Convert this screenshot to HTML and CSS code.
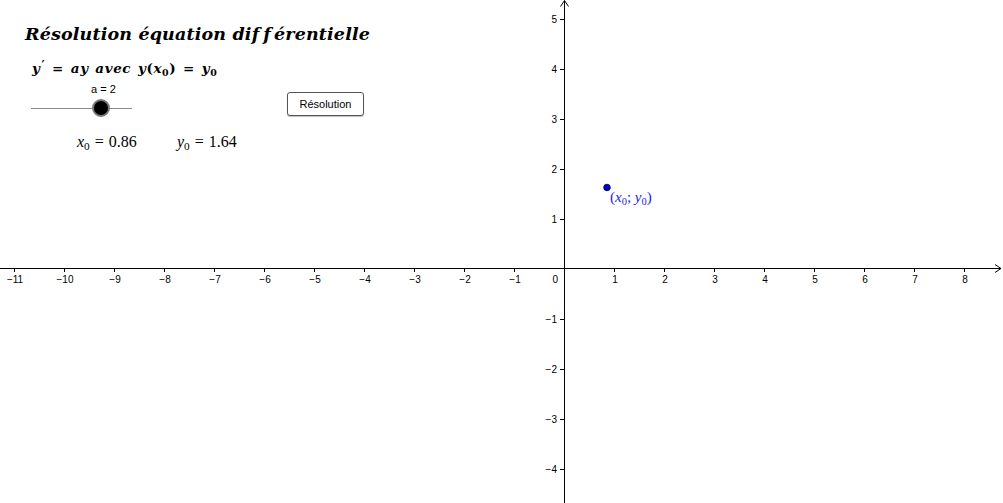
FILE: index.html
```html
<!DOCTYPE html>
<html lang="fr">
<head>
<meta charset="utf-8">
<title>Résolution équation différentielle</title>
<link rel="stylesheet" href="styles.css">
</head>
<body>
<div class="canvas">
  <svg class="axes" width="1003" height="503" viewBox="0 0 1003 503" xmlns="http://www.w3.org/2000/svg">
    <g stroke="#000" stroke-width="1" fill="none">
      <line x1="0" y1="268.5" x2="1001" y2="268.5"/>
      <polyline points="995,264.5 1001,268.5 995,272.5"/>
      <line x1="564.5" y1="0.5" x2="564.5" y2="503"/>
      <polyline points="560.5,6.5 564.5,0.5 568.5,6.5"/>
      <path d="M14.5 268v4M64.5 268v4M114.5 268v4M164.5 268v4M214.5 268v4M264.5 268v4M314.5 268v4M364.5 268v4M414.5 268v4M464.5 268v4M514.5 268v4M614.5 268v4M664.5 268v4M714.5 268v4M764.5 268v4M814.5 268v4M864.5 268v4M914.5 268v4M964.5 268v4"/>
      <path d="M560 19.5h4M560 69.5h4M560 119.5h4M560 169.5h4M560 219.5h4M560 319.5h4M560 369.5h4M560 419.5h4M560 469.5h4"/>
    </g>
    <g class="ticklabels" text-anchor="middle">
      <text x="15" y="283">−11</text>
      <text x="65" y="283">−10</text>
      <text x="115" y="283">−9</text>
      <text x="165" y="283">−8</text>
      <text x="215" y="283">−7</text>
      <text x="265" y="283">−6</text>
      <text x="315" y="283">−5</text>
      <text x="365" y="283">−4</text>
      <text x="415" y="283">−3</text>
      <text x="465" y="283">−2</text>
      <text x="515" y="283">−1</text>
      <text x="615" y="283">1</text>
      <text x="665" y="283">2</text>
      <text x="715" y="283">3</text>
      <text x="765" y="283">4</text>
      <text x="815" y="283">5</text>
      <text x="865" y="283">6</text>
      <text x="915" y="283">7</text>
      <text x="965" y="283">8</text>
    </g>
    <g class="ticklabels" text-anchor="end">
      <text x="558" y="283">0</text>
      <text x="557" y="23">5</text>
      <text x="557" y="73">4</text>
      <text x="557" y="123">3</text>
      <text x="557" y="173">2</text>
      <text x="557" y="223">1</text>
      <text x="557" y="323">−1</text>
      <text x="557" y="373">−2</text>
      <text x="557" y="423">−3</text>
      <text x="557" y="473">−4</text>
    </g>
    <circle cx="607" cy="187.5" r="3.3" fill="#0000cc" stroke="#000033" stroke-width="0.8"/>
  </svg>

  <div class="title">Résolution équation dif<span class="gap">f</span>érentielle</div>
  <div class="equation"><i>y</i><span class="prime">′</span> = <i>ay avec y</i>(<i>x</i><sub>0</sub>) = <i>y</i><sub>0</sub></div>

  <div class="slider">
    <div class="slider-label">a = 2</div>
    <div class="slider-track"><span class="knob"></span></div>
  </div>

  <button class="btn" type="button">Résolution</button>

  <div class="value v-x"><i>x</i><sub>0</sub> = 0.86</div>
  <div class="value v-y"><i>y</i><sub>0</sub> = 1.64</div>

  <div class="point-label">(<i>x</i><sub>0</sub>; <i>y</i><sub>0</sub>)</div>
</div>
</body>
</html>
```
FILE: styles.css
```css
html, body {
  margin: 0;
  padding: 0;
  background: #fff;
}
.canvas {
  position: relative;
  width: 1003px;
  height: 503px;
  overflow: hidden;
  background: #fff;
}
.axes {
  position: absolute;
  left: 0;
  top: 0;
  display: block;
}
.ticklabels {
  font-family: "Liberation Sans", Arial, sans-serif;
  font-size: 10px;
  fill: #000;
}
.title {
  position: absolute;
  left: 25px;
  top: 24px;
  font-family: "DejaVu Serif", serif;
  font-weight: bold;
  font-style: italic;
  font-size: 17.5px;
  letter-spacing: 0.15px;
  color: #000;
  white-space: nowrap;
}
.gap {
  margin-left: 4px;
  margin-right: 3px;
}
.equation {
  position: absolute;
  left: 32px;
  top: 59px;
  font-family: "DejaVu Serif", serif;
  font-weight: bold;
  font-size: 13.5px;
  letter-spacing: 0.6px;
  word-spacing: 1.5px;
  color: #000;
  white-space: nowrap;
}
.equation i { font-style: italic; }
.prime {
  display: inline-block;
  vertical-align: 0.25em;
  font-size: 0.9em;
  margin-left: 1px;
}
sub {
  font-size: 0.7em;
  vertical-align: -0.3em;
  line-height: 0;
  font-style: normal;
}
.slider {
  position: absolute;
  left: 31px;
  top: 83px;
  width: 101px;
}
.slider-label {
  font-family: "Liberation Sans", Arial, sans-serif;
  font-size: 11px;
  text-align: center;
  padding-left: 44px;
  height: 14px;
  line-height: 12px;
}
.slider-track {
  position: relative;
  margin-top: 11px;
  height: 1px;
  background: #8a8a8a;
}
.knob {
  position: absolute;
  left: 61px;
  top: -9px;
  width: 14px;
  height: 14px;
  border-radius: 50%;
  background: #000;
  border: 2.5px solid #7a7a7a;
}
.btn {
  position: absolute;
  left: 287px;
  top: 92px;
  width: 77px;
  height: 24px;
  padding: 0;
  background: #fff;
  border: 1px solid #555;
  border-radius: 3px;
  box-shadow: 0 1px 1px rgba(0,0,0,0.25);
  font-family: "Liberation Sans", Arial, sans-serif;
  font-size: 11px;
  color: #000;
}
.value {
  position: absolute;
  top: 133px;
  font-family: "Liberation Serif", serif;
  font-size: 16px;
  word-spacing: 1px;
  color: #000;
  white-space: nowrap;
}
.v-x { left: 77px; }
.v-y { left: 177px; }
.point-label {
  position: absolute;
  left: 610px;
  top: 189px;
  font-family: "Liberation Serif", serif;
  font-size: 15px;
  color: #1a1aff;
  white-space: nowrap;
}
```
